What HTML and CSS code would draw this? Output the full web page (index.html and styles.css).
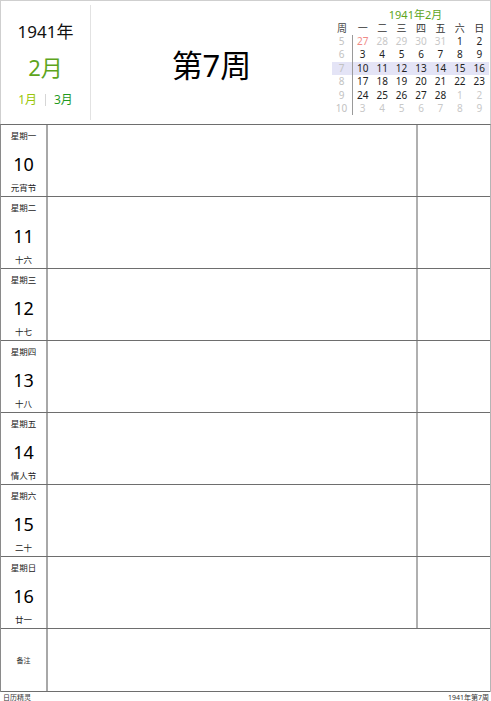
FILE: index.html
```html
<!DOCTYPE html>
<html lang="zh-CN">
<head>
<meta charset="utf-8">
<title>1941年第7周</title>
<link rel="stylesheet" href="styles.css">
</head>
<body>
<div class="page">
  <header class="head">
    <div class="ym">
      <div class="year">1941年</div>
      <div class="month">2月</div>
      <div class="nav"><span class="prev">1月</span><span class="sep"></span><span class="next">3月</span></div>
    </div>
    <div class="wk">第7周</div>
    <div class="mini">
      <div class="mini-title">1941年2月</div>
      <div class="mrow mhead"><span class="wn">周</span><span>一</span><span>二</span><span>三</span><span>四</span><span>五</span><span>六</span><span>日</span></div>
      <div class="mrow"><span class="wn">5</span><span class="hol">27</span><span class="oth">28</span><span class="oth">29</span><span class="oth">30</span><span class="oth">31</span><span>1</span><span>2</span></div>
      <div class="mrow"><span class="wn">6</span><span>3</span><span>4</span><span>5</span><span>6</span><span>7</span><span>8</span><span>9</span></div>
      <div class="mrow cur"><span class="wn">7</span><span>10</span><span>11</span><span>12</span><span>13</span><span>14</span><span>15</span><span>16</span></div>
      <div class="mrow"><span class="wn">8</span><span>17</span><span>18</span><span>19</span><span>20</span><span>21</span><span>22</span><span>23</span></div>
      <div class="mrow"><span class="wn">9</span><span>24</span><span>25</span><span>26</span><span>27</span><span>28</span><span class="oth">1</span><span class="oth">2</span></div>
      <div class="mrow"><span class="wn">10</span><span class="oth">3</span><span class="oth">4</span><span class="oth">5</span><span class="oth">6</span><span class="oth">7</span><span class="oth">8</span><span class="oth">9</span></div>
    </div>
  </header>
  <div class="days">
    <div class="row"><div class="dcell"><div class="dname">星期一</div><div class="dnum">10</div><div class="lunar">元宵节</div></div><div class="main"></div><div class="side"></div></div>
    <div class="row"><div class="dcell"><div class="dname">星期二</div><div class="dnum">11</div><div class="lunar">十六</div></div><div class="main"></div><div class="side"></div></div>
    <div class="row"><div class="dcell"><div class="dname">星期三</div><div class="dnum">12</div><div class="lunar">十七</div></div><div class="main"></div><div class="side"></div></div>
    <div class="row"><div class="dcell"><div class="dname">星期四</div><div class="dnum">13</div><div class="lunar">十八</div></div><div class="main"></div><div class="side"></div></div>
    <div class="row"><div class="dcell"><div class="dname">星期五</div><div class="dnum">14</div><div class="lunar">情人节</div></div><div class="main"></div><div class="side"></div></div>
    <div class="row"><div class="dcell"><div class="dname">星期六</div><div class="dnum">15</div><div class="lunar">二十</div></div><div class="main"></div><div class="side"></div></div>
    <div class="row"><div class="dcell"><div class="dname">星期日</div><div class="dnum">16</div><div class="lunar">廿一</div></div><div class="main"></div><div class="side"></div></div>
    <div class="row notes"><div class="ncell">备注</div><div class="main"></div></div>
  </div>
  <footer class="foot"><span>日历精灵</span><span>1941年第7周</span></footer>
</div>
</body>
</html>
```

FILE: styles.css
```css
* { box-sizing: border-box; }
html, body { margin: 0; padding: 0; background: #fff; }
body {
  font-family: "Noto Sans", "Noto Sans CJK SC", sans-serif;
  color: #111;
}
.page { width: 491px; }

.head {
  display: flex;
  height: 124px;
  border: 1px solid #cfcfcf;
  border-bottom: none;
}
.ym {
  width: 90px;
  margin: 4px 0 4px;
  border-right: 1px solid #e2e2e2;
  display: flex;
  flex-direction: column;
  align-items: center;
  padding-top: 15px;
}
.year { font-size: 17px; line-height: 24px; color: #111; }
.month { font-size: 22px; line-height: 30px; margin-top: 8px; color: #5ea51c; }
.nav {
  display: flex;
  align-items: center;
  font-size: 12px;
  line-height: 20px;
  margin-top: 8px;
}
.prev { color: #9bc70a; }
.next { color: #1f9a1f; }
.sep { width: 1px; height: 12px; background: #d6d6d6; margin: 0 8px; }

.wk {
  flex: 1;
  display: flex;
  align-items: center;
  justify-content: center;
  font-size: 31px;
  padding-top: 2px;
  color: #000;
}

.mini {
  width: 157px;
  margin-right: 1px;
  padding-top: 7px;
  font-size: 10px;
}
.mini-title {
  text-align: center;
  color: #5ea51c;
  font-size: 11px;
  line-height: 14px;
  padding-left: 10px;
}
.mrow {
  display: grid;
  grid-template-columns: 21px repeat(7, 1fr);
  height: 13.4px;
  line-height: 13.4px;
  color: #222;
}
.mrow span { text-align: center; }
.mrow .wn { color: #c2c2c2; border-right: 1px solid #9a9a9a; padding-right: 1px; }
.mhead { height: 13px; line-height: 13px; color: #333; }
.mhead .wn { color: #444; border-right: none; }
.mrow.cur { background: #e4e4f6; }
.oth { color: #c8c8c8; }
.hol { color: #f08a86; }

.days {
  border-top: 1px solid #6e6e6e;
  border-left: 1px solid #8a8a8a;
  border-right: 1px solid #b5b5b5;
}
.row {
  display: flex;
  height: 72px;
  border-bottom: 1px solid #6e6e6e;
}
.dcell {
  width: 47px;
  border-right: 2px solid #a8a8a8;
  display: flex;
  flex-direction: column;
  align-items: center;
  padding-top: 5px;
}
.dname { font-size: 8.5px; line-height: 12px; color: #222; }
.dnum { font-size: 18px; line-height: 28px; margin-top: 8px; color: #000; }
.lunar { font-size: 8.5px; line-height: 12px; margin-top: 4px; color: #222; }
.main { flex: 1; border-right: 2px solid #b0b0b0; }
.side { width: 72px; }
.notes { height: 63px; }
.notes .main { border-right: none; }
.ncell {
  width: 47px;
  border-right: 2px solid #a8a8a8;
  display: flex;
  align-items: center;
  justify-content: center;
  font-size: 7px;
  color: #333;
}

.foot {
  display: flex;
  justify-content: space-between;
  height: 10px;
  line-height: 11px;
  font-size: 7px;
  color: #333;
  padding: 0 2px 0 3px;
}
```
